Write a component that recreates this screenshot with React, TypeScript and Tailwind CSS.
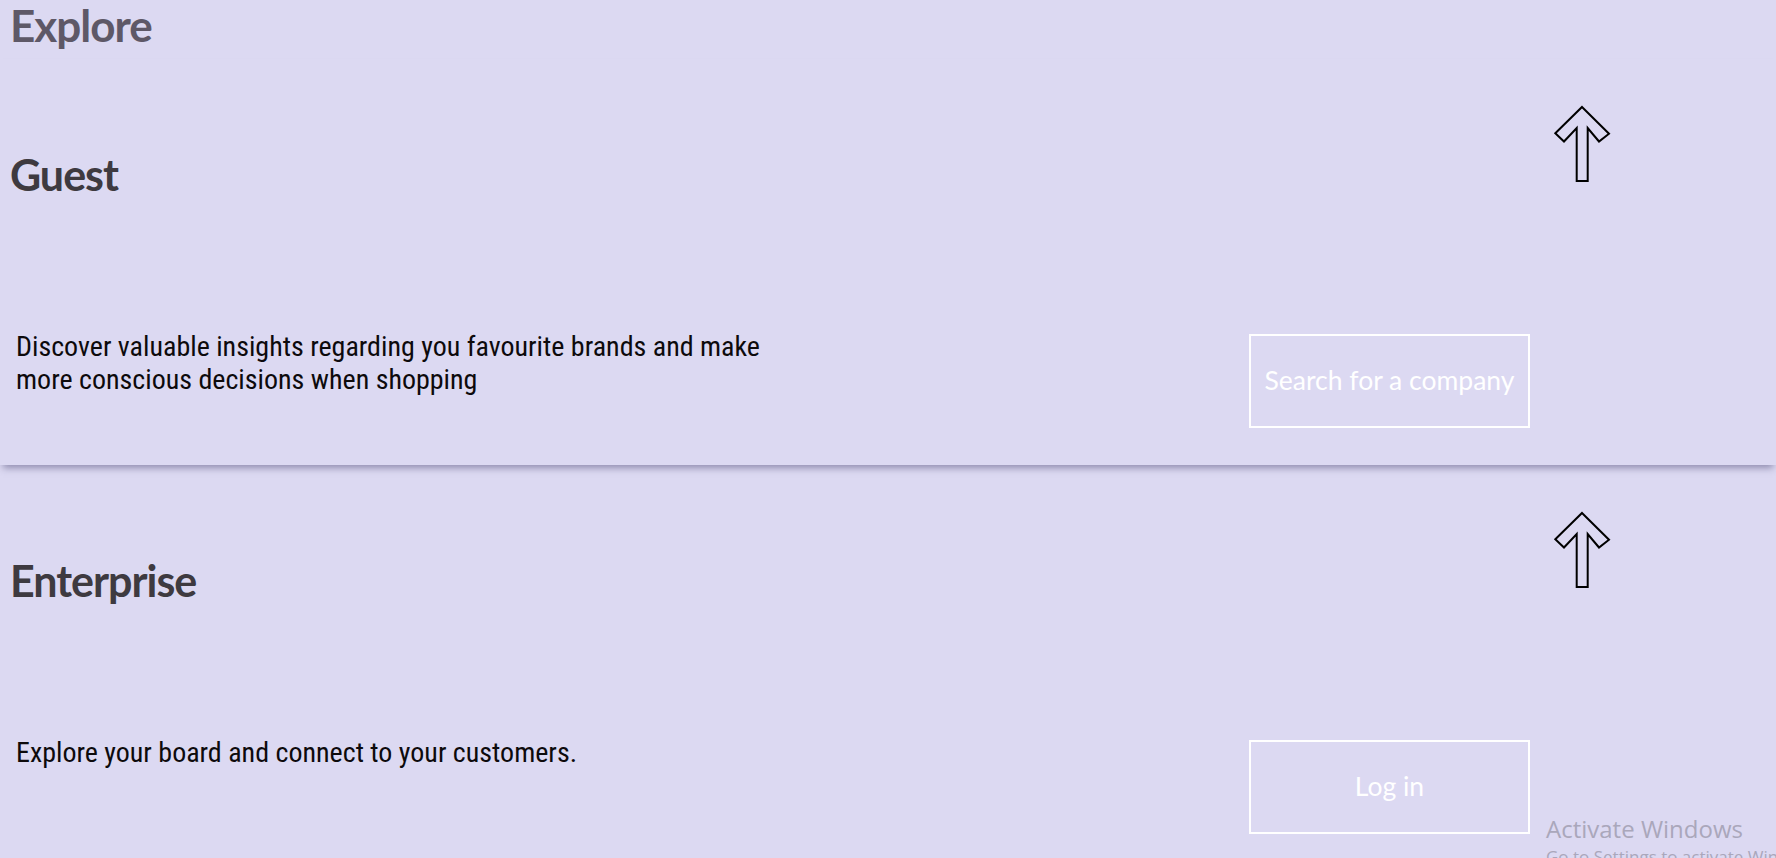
import React from 'react';

const headingFont = { fontFamily: 'Lato, "Noto Sans", sans-serif' };
const bodyFont = { fontFamily: '"Roboto Condensed", "Liberation Sans Narrow", Roboto, sans-serif' };

const UpArrow = () => (
  <svg width="58" height="78" viewBox="0 0 58 78" fill="none">
    <polygon
      points="29,2 56,28.7 46,36.5 34.7,23 34.7,76 23.7,76 23.7,23 11,36.5 2.3,28.3"
      stroke="#000"
      strokeWidth="2"
      strokeLinejoin="miter"
      fill="none"
    />
  </svg>
);

interface SectionProps {
  title: string;
  text: React.ReactNode;
  action: string;
  raised?: boolean;
}

const Section: React.FC<SectionProps> = ({ title, text, action, raised }) => (
  <section
    className={`relative flex h-[406px] flex-col bg-[#dcd9f2] ${
      raised ? 'z-10 shadow-[0_6px_7px_-3px_rgba(70,65,110,0.5)]' : ''
    }`}
  >
    <div className="flex items-start">
      <h2
        className="mt-[86px] pl-[10px] text-[43px] leading-[60px] font-bold tracking-[-1px] text-[#3e3a40]"
        style={headingFont}
      >
        {title}
      </h2>
      <div className="ml-auto mr-[165px] mt-[46px]">
        <UpArrow />
      </div>
    </div>
    <div className="mt-[129px] flex items-start">
      <p
        className="mt-[-4px] w-[800px] pl-[16px] text-[28px] leading-[33px] text-[#0d0a0c]"
        style={bodyFont}
      >
        {text}
      </p>
      <button
        className="ml-auto mr-[246px] flex h-[94px] w-[281px] items-center justify-center border-2 border-white text-[26.5px] text-white"
        style={headingFont}
      >
        {action}
      </button>
    </div>
  </section>
);

export default function App() {
  return (
    <div className="relative h-[858px] w-full overflow-hidden bg-[#dcd9f2]">
      <header className="h-[59px]">
        <h1
          className="pl-[10px] text-[44px] leading-[50px] font-bold tracking-[-1px] text-[#5e5867]"
          style={headingFont}
        >
          Explore
        </h1>
      </header>
      <Section
        raised
        title="Guest"
        text={
          <>
            Discover valuable insights regarding you favourite brands and make
            <br />
            more conscious decisions when shopping
          </>
        }
        action="Search for a company"
      />
      <Section
        title="Enterprise"
        text="Explore your board and connect to your customers."
        action="Log in"
      />
      <div
        className="pointer-events-none absolute left-[1546px] top-[812px] whitespace-nowrap text-[#aaa7bb]"
        style={{ fontFamily: '"Open Sans", "Noto Sans", sans-serif' }}
      >
        <div className="text-[24px] leading-[34px]">Activate Windows</div>
        <div className="text-[17px] leading-[22px]">Go to Settings to activate Windows.</div>
      </div>
    </div>
  );
}
